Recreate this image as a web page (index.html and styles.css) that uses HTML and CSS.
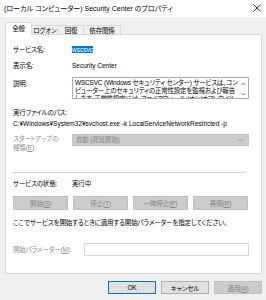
FILE: index.html
```html
<!DOCTYPE html>
<html lang="ja">
<head>
    <meta charset="UTF-8">
    <title>Security Center のプロパティ</title>
    <link rel="stylesheet" href="styles.css">
</head>
<body>
    <div class="window">
        <div class="titlebar">
            <span class="title">(ローカル コンピューター) Security Center のプロパティ</span>
            <svg class="close" width="8" height="8" viewBox="0 0 8 8">
                <path d="M0.5 0.5 L7.5 7.5 M7.5 0.5 L0.5 7.5" stroke="#1a1a1a" stroke-width="0.9" fill="none"/>
            </svg>
        </div>

        <div class="dialog">
            <!-- タブ -->
            <div class="tabs">
                <div class="tab active">全般</div>
                <div class="tab">ログオン</div>
                <div class="tab tab-short">回復</div>
                <div class="tab tab-wide">依存関係</div>
            </div>

            <div class="panel">
                <div class="row row-name">
                    <span class="label">サービス名:</span>
                    <span class="value latin"><span class="selected">wscsvc</span></span>
                </div>
                <div class="row row-display">
                    <span class="label">表示名:</span>
                    <span class="value latin">Security Center</span>
                </div>
                <div class="row row-desc">
                    <span class="label label-top">説明:</span>
                    <div class="desc-box">
                        <div class="desc-text">WSCSVC (Windows セキュリティ センター) サービスは、コンピューター上のセキュリティの正常性設定を監視および報告します。正常性設定には、ファイアウォール (オン/オフ)、ウイルス対策 (オン/オフ/期限切れ)</div>
                        <div class="scrollbar">
                            <svg width="5" height="4" viewBox="0 0 5 4"><path d="M0.5 3 L2.5 1 L4.5 3" stroke="#606060" stroke-width="0.8" fill="none"/></svg>
                            <svg width="5" height="4" viewBox="0 0 5 4"><path d="M0.5 1 L2.5 3 L4.5 1" stroke="#606060" stroke-width="0.8" fill="none"/></svg>
                        </div>
                    </div>
                </div>
                <div class="row row-pathlabel">
                    <span class="label">実行ファイルのパス:</span>
                </div>
                <div class="row row-path latin">
                    C:¥Windows¥System32¥svchost.exe -k LocalServiceNetworkRestricted -p
                </div>
                <div class="row row-startup">
                    <span class="label label-disabled">スタートアップの<br>種類(<u>E</u>):</span>
                    <div class="combo">
                        <span>自動 (遅延開始)</span>
                        <svg width="6" height="4" viewBox="0 0 6 4"><path d="M0.5 1 L3 3 L5.5 1" stroke="#9a9a9a" stroke-width="0.8" fill="none"/></svg>
                    </div>
                </div>

                <div class="separator"></div>

                <div class="row row-status">
                    <span class="label">サービスの状態:</span>
                    <span class="value">実行中</span>
                </div>
                <div class="service-buttons">
                    <button class="btn" disabled>開始(<u>S</u>)</button>
                    <button class="btn" disabled>停止(<u>T</u>)</button>
                    <button class="btn" disabled>一時停止(<u>P</u>)</button>
                    <button class="btn" disabled>再開(<u>R</u>)</button>
                </div>
                <div class="row row-hint">
                    ここでサービスを開始するときに適用する開始パラメーターを指定してください。
                </div>
                <div class="row row-params">
                    <span class="label label-disabled label-wide">開始パラメーター(<u>M</u>):</span>
                    <div class="param-input"></div>
                </div>
            </div>

            <div class="footer">
                <button class="btn-dialog btn-default">OK</button>
                <button class="btn-dialog">キャンセル</button>
                <button class="btn-dialog" disabled>適用(<u>A</u>)</button>
            </div>
        </div>
    </div>
</body>
</html>
```

FILE: styles.css
```css
html, body {
    margin: 0;
    padding: 0;
    width: 266px;
    height: 300px;
    overflow: hidden;
}
body {
    background: #f0f0f0;
    font-family: "Liberation Sans", "Noto Sans CJK JP", sans-serif;
    font-feature-settings: "palt";
    font-size: 6.5px;
    letter-spacing: -0.15px;
    color: #000;
}
.latin {
    letter-spacing: 0;
}
.window {
    width: 268px;
}
.titlebar {
    height: 17px;
    background: #fff;
    display: flex;
    align-items: center;
    justify-content: space-between;
    padding: 0 6px 0 4px;
}
.title {
    font-size: 7px;
    letter-spacing: 0;
    line-height: 17px;
    white-space: nowrap;
}
.close {
    margin-right: 1px;
    margin-top: -1px;
}
.dialog {
    padding: 5px 0 0 5px;
}

/* タブ */
.tabs {
    display: flex;
    align-items: flex-end;
    height: 12px;
    position: relative;
    z-index: 1;
}
.tab {
    width: 27px;
    height: 9px;
    line-height: 9px;
    text-align: center;
    border: 1px solid #d9d9d9;
    border-bottom: none;
    border-left: none;
    box-sizing: border-box;
    background: #f0f0f0;
    white-space: nowrap;
}
.tab-short {
    width: 25px;
}
.tab-wide {
    width: 37px;
}
.tab.active {
    height: 13px;
    line-height: 11px;
    margin-bottom: -1px;
    background: #fff;
    border-left: 1px solid #d9d9d9;
}

/* パネル */
.panel {
    width: 257px;
    height: 240px;
    box-sizing: border-box;
    background: #fff;
    border: 1px solid #d9d9d9;
    padding: 10px 12px 0 7px;
}
.row {
    display: flex;
    line-height: 9px;
    white-space: nowrap;
}
.label {
    width: 59px;
    flex-shrink: 0;
    letter-spacing: -0.15px;
}
.label-wide {
    width: 71px;
    line-height: 13px;
}
.label-top {
    margin-top: 2px;
}
.label-disabled {
    color: #8c8c8c;
}
.selected {
    background: #0078d7;
    color: #fff;
    padding: 0 0.5px;
    margin-left: -0.5px;
}
.row-display {
    margin-top: 7px;
}
.row-desc {
    margin-top: 7px;
}
.desc-box {
    width: 177px;
    height: 22px;
    box-sizing: border-box;
    border: 1px solid #adadad;
    display: flex;
    overflow: hidden;
}
.desc-text {
    flex: 1;
    min-width: 0;
    padding: 1px 0 0 2px;
    line-height: 8px;
    letter-spacing: -0.2px;
    white-space: normal;
    overflow: hidden;
}
.scrollbar {
    width: 9px;
    flex-shrink: 0;
    display: flex;
    flex-direction: column;
    align-items: center;
    justify-content: space-between;
    padding: 4px 0 2px;
    box-sizing: border-box;
    background: #fff;
}
.row-pathlabel {
    margin-top: 9px;
}
.row-path {
    margin-top: 2px;
}
.row-startup {
    margin-top: 6px;
}
.combo {
    width: 177px;
    height: 12px;
    box-sizing: border-box;
    background: #cccccc;
    border: 1px solid #c4c4c4;
    color: #838383;
    display: flex;
    align-items: center;
    justify-content: space-between;
    padding: 0 4px 0 3px;
    line-height: 10px;
}
.separator {
    height: 1px;
    background: #d3d3d3;
    margin: 20px 3px 0 0;
}
.row-status {
    margin-top: 6px;
}
.service-buttons {
    display: flex;
    gap: 5px;
    margin-top: 8px;
}
.btn {
    width: 55px;
    height: 14px;
    padding: 0;
    font: inherit;
    font-feature-settings: "palt";
    letter-spacing: inherit;
    background: #cccccc;
    border: 1px solid #bfbfbf;
    color: #838383;
}
.row-hint {
    margin-top: 8px;
}
.row-params {
    margin-top: 16px;
}
.param-input {
    width: 165px;
    height: 13px;
    box-sizing: border-box;
    border: 1px solid #d9d9d9;
    background: #fff;
}

/* フッター */
.footer {
    display: flex;
    justify-content: flex-end;
    gap: 5px;
    width: 257px;
    margin-top: 7px;
}
.btn-dialog {
    width: 48px;
    height: 13px;
    padding: 0;
    font: inherit;
    font-feature-settings: "palt";
    letter-spacing: inherit;
    background: #e1e1e1;
    border: 1px solid #adadad;
    color: #000;
}
.btn-default {
    border: 1px solid #0078d7;
}
.btn-dialog:disabled {
    background: #cccccc;
    border-color: #bfbfbf;
    color: #838383;
}
```
